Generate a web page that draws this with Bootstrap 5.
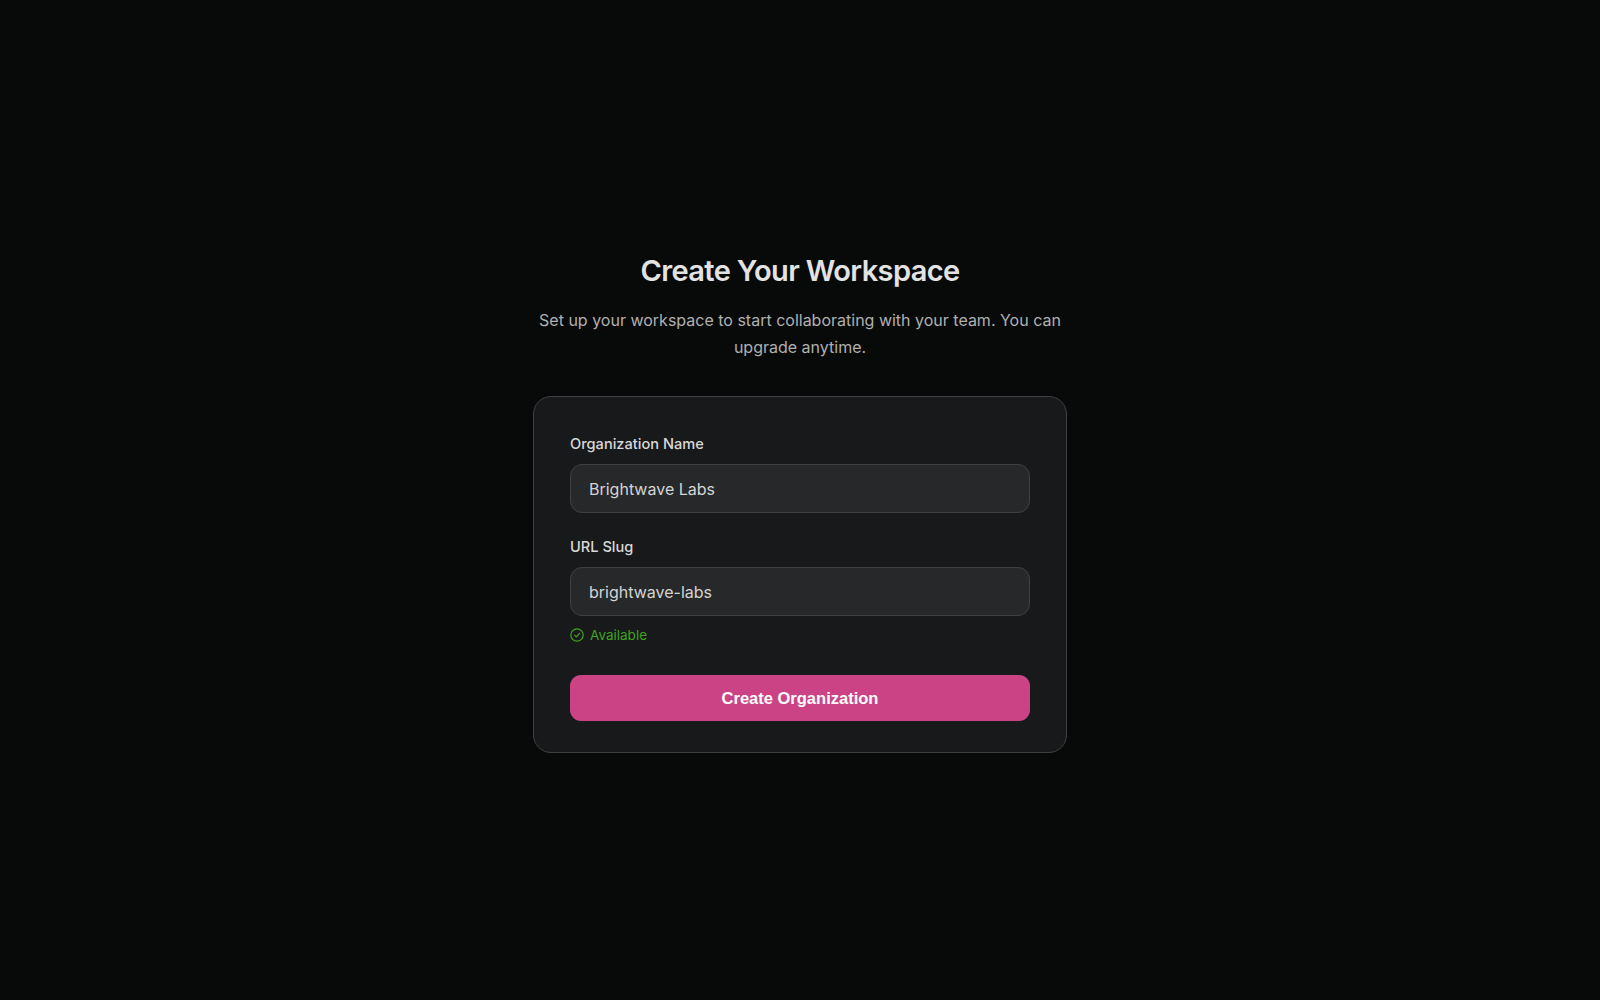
<!DOCTYPE html>
<html lang="en">
<head>
<meta charset="utf-8">
<title>Create Your Workspace</title>
<link href="https://cdn.jsdelivr.net/npm/bootstrap@5.3.0/dist/css/bootstrap.min.css" rel="stylesheet">
<style>
html, body { height: 100%; }
body { background: #080a0a; font-family: Inter, "Liberation Sans", sans-serif; color: #e3e3e3; }
.ws-wrap { width: 534px; }
.ws-title { font-size: 29px; font-weight: 600; line-height: 48px; letter-spacing: -0.62px; color: #e2e3e2; margin-bottom: 12px; }
.ws-sub { font-size: 16px; line-height: 26.5px; color: #b0b0b0; margin-bottom: 36px; }
.ws-panel { background: #18191a; border: 1px solid #3f4042; border-radius: 18px; padding: 37px 36px 31px; }
.ws-label { font-size: 14.6px; font-weight: 500; line-height: 21px; color: #d8d8d8; margin-bottom: 9px; display: block; }
.ws-input.form-control { background: #272829; border: 1px solid #404143; border-radius: 12px; color: #d4d4d4; font-size: 16px; height: 49px; padding: 1px 18px 0; box-shadow: none; }
.ws-ok { font-size: 13.5px; line-height: 20px; color: #3fa51e; margin-top: 9px; gap: 6px; }
.ws-btn.btn { background: #cb4385; border: 0; border-radius: 11px; color: #fff; font-family: "Liberation Sans", Arial, sans-serif; font-size: 16.5px; font-weight: 700; height: 46px; margin-top: 30px; }
</style>
</head>
<body class="d-flex align-items-center justify-content-center">
<main class="ws-wrap text-center">
  <h1 class="ws-title">Create Your Workspace</h1>
  <p class="ws-sub">Set up your workspace to start collaborating with your team. You can upgrade anytime.</p>
  <form class="ws-panel text-start">
    <div class="mb-4">
      <label class="ws-label" for="org">Organization Name</label>
      <input id="org" class="form-control ws-input" value="Brightwave Labs">
    </div>
    <div>
      <label class="ws-label" for="slug">URL Slug</label>
      <input id="slug" class="form-control ws-input" value="brightwave-labs">
      <div class="ws-ok d-flex align-items-center">
        <svg width="14" height="14" viewBox="0 0 14 14" fill="none" stroke="currentColor" stroke-width="1.2" stroke-linecap="round" stroke-linejoin="round"><circle cx="7" cy="7" r="6.2"/><path d="M4.6 7.2 6.3 8.9 9.5 5.3"/></svg>
        <span>Available</span>
      </div>
    </div>
    <button type="button" class="btn ws-btn w-100">Create Organization</button>
  </form>
</main>
<script src="https://cdn.jsdelivr.net/npm/bootstrap@5.3.0/dist/js/bootstrap.bundle.min.js"></script>
</body>
</html>
